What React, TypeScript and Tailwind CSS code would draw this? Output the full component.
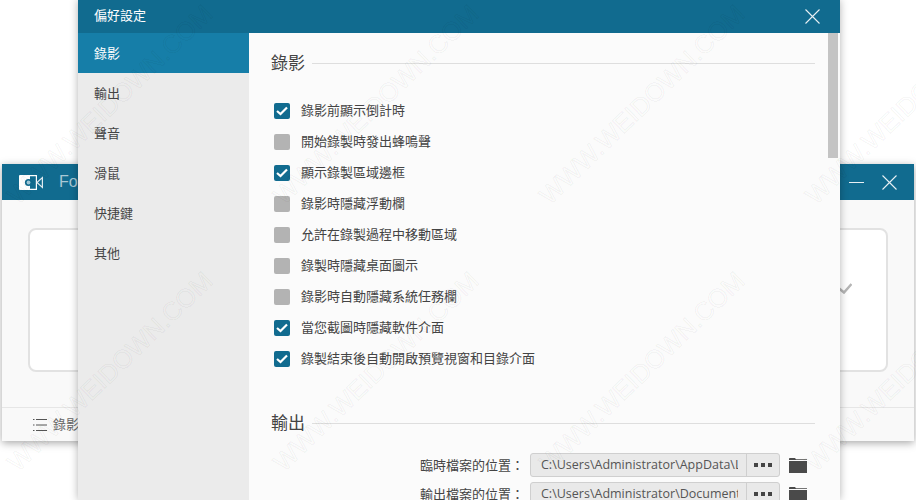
const font = { fontFamily: '"Noto Sans CJK TC", "Liberation Sans", sans-serif' }

const navItems = ['錄影', '輸出', '聲音', '滑鼠', '快捷鍵', '其他']

const options = [
  { label: '錄影前顯示倒計時', checked: true },
  { label: '開始錄製時發出蜂鳴聲', checked: false },
  { label: '顯示錄製區域邊框', checked: true },
  { label: '錄影時隱藏浮動欄', checked: false },
  { label: '允許在錄製過程中移動區域', checked: false },
  { label: '錄製時隱藏桌面圖示', checked: false },
  { label: '錄影時自動隱藏系統任務欄', checked: false },
  { label: '當您截圖時隱藏軟件介面', checked: true },
  { label: '錄製結束後自動開啟預覽視窗和目錄介面', checked: true },
]

const paths = [
  { label: '臨時檔案的位置：', value: 'C:\\Users\\Administrator\\AppData\\Local\\Temp' },
  { label: '輸出檔案的位置：', value: 'C:\\Users\\Administrator\\Documents\\Output' },
]

// watermark tiles repeat every 266px across and 267px down
const watermarks = [
  { x: 12, y: 200 },
  { x: 278, y: 200 },
  { x: 544, y: 200 },
  { x: 810, y: 200 },
  { x: 12, y: 467 },
  { x: 278, y: 467 },
  { x: 544, y: 467 },
  { x: 810, y: 467 },
]

function CloseIcon() {
  return (
    <svg width="15" height="15" viewBox="0 0 15 15" fill="none" stroke="#e8f0f4" strokeWidth="1.1">
      <path d="M0.5 0.5 L14.5 14.5 M14.5 0.5 L0.5 14.5" />
    </svg>
  )
}

function Checkbox({ checked }: { checked: boolean }) {
  if (!checked) return <div className="h-4 w-4 rounded-[2px] bg-[#b3b3b3]" />
  return (
    <div className="flex h-4 w-4 items-center justify-center rounded-[2px] bg-[#116b8f]">
      <svg width="12" height="10" viewBox="0 0 12 10" fill="none" stroke="#fff" strokeWidth="2.2">
        <path d="M1 5 L4.5 8 L11 1.5" />
      </svg>
    </div>
  )
}

function SectionTitle({ title }: { title: string }) {
  return (
    <div className="flex h-5 items-center gap-[7px] pr-[13px]">
      <span className="pb-[2px] text-[17px] leading-5 text-[#444]">{title}</span>
      <div className="h-px flex-1 bg-[#dedede]" />
    </div>
  )
}

function BackWindow() {
  return (
    <div className="absolute left-[2px] top-[164px] flex h-[277px] w-[912px] flex-col bg-[#f9f9f9] shadow-[0_2px_8px_rgba(0,0,0,0.35)]">
      <div className="flex h-9 items-center bg-[#116b8f] pl-[17px] pr-[17px]">
        <svg width="24" height="15" viewBox="0 0 24 15">
          <path d="M1 0 H11 V15 H1 Q0 15 0 14 V1 Q0 0 1 0 Z" fill="#fff" />
          <path d="M10 0.6 H17.4 V14.4 H10" fill="none" stroke="#fff" strokeWidth="1.2" />
          <circle cx="9.5" cy="7.5" r="3.6" fill="#116b8f" />
          <circle cx="9.5" cy="7.5" r="1.9" fill="#9fc6d6" />
          <path d="M18 7.5 L23.4 2.6 V12.4 Z" fill="none" stroke="#dfeaf0" strokeWidth="1.2" />
        </svg>
        <span className="ml-4 text-[16px] text-[#a9c8d5]" style={{ fontFamily: '"Liberation Sans", sans-serif' }}>
          Fonepaw
        </span>
        <div className="ml-auto flex items-center gap-[18px]">
          <div className="h-px w-[15px] bg-[#e8f0f4]" />
          <CloseIcon />
        </div>
      </div>
      <div className="px-[26px] pt-7">
        <div className="flex h-[144px] items-center justify-end rounded-[8px] border-2 border-[#e2e2e2] bg-white pb-6 pr-[34px]">
          <svg width="14" height="12" viewBox="0 0 14 12" fill="none" stroke="#b5b5b5" strokeWidth="2.5">
            <path d="M0.5 6 L6 10.5 L13.5 2" />
          </svg>
        </div>
      </div>
      <div className="mt-[35px] flex h-[34px] items-center gap-[6px] border-t border-[#e6e6e6] pl-[31px]">
        <svg width="14" height="14" viewBox="0 0 14 14" stroke="#555" strokeWidth="1">
          <path d="M3 1.5 H14 M3 7 H14 M3 12.5 H14" />
          <path d="M0 1.5 H1.5 M0 7 H1.5 M0 12.5 H1.5" />
        </svg>
        <span className="pb-[2px] text-[13px] text-[#666]">錄影歷史</span>
      </div>
    </div>
  )
}

function SettingsDialog() {
  return (
    <div className="absolute left-[78px] top-0 flex h-[500px] w-[762px] flex-col overflow-hidden bg-[#fbfbfb] shadow-[0_0_8px_rgba(0,0,0,0.3)]">
      <div className="flex h-[33px] shrink-0 items-center justify-between bg-[#116b8f] pl-4 pr-[20px]">
        <span className="pb-[3px] text-[13px] text-white">偏好設定</span>
        <CloseIcon />
      </div>
      <div className="flex min-h-0 flex-1">
        <div className="w-[171px] shrink-0 bg-[#ebebeb]">
          {navItems.map((item, i) => (
            <div
              key={item}
              className={`flex h-10 items-center pl-4 text-[13px] ${i === 0 ? 'bg-[#167ea8] text-white' : 'text-[#444]'}`}
            >
              {item}
            </div>
          ))}
        </div>
        <div className="relative min-w-0 flex-1 overflow-hidden pl-[22px] pr-[12px] pt-5">
          <SectionTitle title="錄影" />
          <div className="mt-[22px]">
            {options.map((opt) => (
              <div key={opt.label} className="flex h-[31px] items-center gap-[11px] pl-[3px]">
                <Checkbox checked={opt.checked} />
                <span className="pb-[2px] text-[13px] text-[#444]">{opt.label}</span>
              </div>
            ))}
          </div>
          <div className="mt-[39px]">
            <SectionTitle title="輸出" />
          </div>
          <div className="mt-5 flex flex-col gap-[5px]">
            {paths.map((p) => (
              <div key={p.label} className="flex h-6 items-center">
                <span className="w-[253px] shrink-0 text-right text-[13px] text-[#444]">{p.label}</span>
                <div className="ml-[6px] flex h-6 w-[250px] shrink-0 items-center rounded-[3px] border border-[#cfcfcf] bg-[#e9e9e9]">
                  <div className="ml-[10px] mr-[8px] min-w-0 flex-1 overflow-hidden whitespace-nowrap text-[12.5px] text-[#555]" style={{ fontFamily: '"Open Sans", sans-serif' }}>
                    {p.value}
                  </div>
                  <div className="flex h-full w-[33px] shrink-0 items-center justify-center gap-[3px] border-l border-[#cfcfcf]">
                    <span className="h-[4px] w-[4px] bg-[#444]" />
                    <span className="h-[4px] w-[4px] bg-[#444]" />
                    <span className="h-[4px] w-[4px] bg-[#444]" />
                  </div>
                </div>
                <svg className="ml-[9px] shrink-0" width="18" height="15" viewBox="0 0 18 15" fill="#4a4a4a">
                  <path d="M0 0.5 Q0 0 1 0 H6 L7 1.2 H18 V2 H0 Z M0 3 H18 V15 H0 Z" />
                </svg>
              </div>
            ))}
          </div>
          <div className="absolute right-[2px] top-0 h-[125px] w-[10px] bg-[#c4c4c4]" />
        </div>
      </div>
    </div>
  )
}

export default function App() {
  return (
    <div className="relative h-[500px] w-[916px] overflow-hidden bg-white" style={font}>
      <BackWindow />
      <SettingsDialog />
      {watermarks.map((w) => (
        <span
          key={`${w.x}-${w.y}`}
          className="pointer-events-none absolute origin-left -rotate-[44deg] whitespace-nowrap text-[25.5px] leading-none text-transparent [-webkit-text-stroke:1px_rgba(0,0,0,0.05)]"
          style={{ left: w.x, top: w.y - 13, fontFamily: '"Liberation Sans", sans-serif' }}
        >
          WWW.WEIDOWN.COM
        </span>
      ))}
    </div>
  )
}
